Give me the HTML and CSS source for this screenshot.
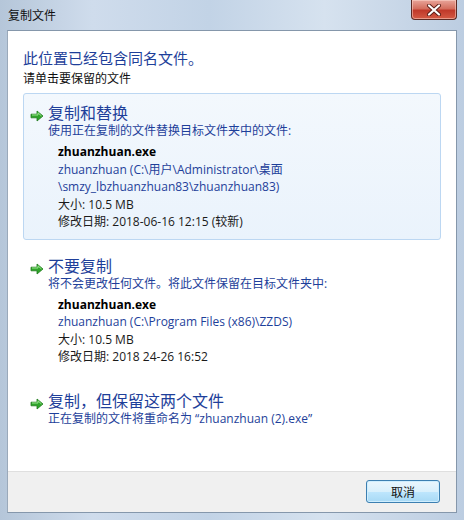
FILE: index.html
```html
<!DOCTYPE html>
<html lang="zh-CN">
<head>
  <meta charset="UTF-8" />
  <title>复制文件</title>
  <link rel="stylesheet" href="styles.css">
</head>
<body>
  <div class="window">
    <div class="titlebar">
      <span class="title">复制文件</span>
      <div class="closeBtn">
        <svg width="16" height="12" viewBox="0 0 16 12">
          <path d="M3 1.5 L13 10.5 M13 1.5 L3 10.5" stroke="#5a1d16" stroke-width="4" stroke-linecap="round"/>
          <path d="M3 1.5 L13 10.5 M13 1.5 L3 10.5" stroke="#ffffff" stroke-width="2.2" stroke-linecap="round"/>
        </svg>
      </div>
    </div>

    <div class="client">
      <div class="content">
        <h1 class="mainText">此位置已经包含同名文件。</h1>
        <p class="hint">请单击要保留的文件</p>

        <div class="option selected">
          <div class="optHead">
            <svg class="arrow" width="14" height="12" viewBox="0 0 14 12">
              <path d="M1 4.2 H7 V1 L13 6 L7 11 V7.8 H1 Z" fill="#2fa52a" stroke="#1f7a1c" stroke-width="0.8"/>
              <path d="M2 5 H8 V2.8 L11.5 6" fill="none" stroke="#9be58f" stroke-width="1"/>
            </svg>
            <span class="optTitle">复制和替换</span>
          </div>
          <p class="optDesc">使用正在复制的文件替换目标文件夹中的文件:</p>
          <div class="fileInfo">
            <p class="fileName">zhuanzhuan.exe</p>
            <p class="filePath">zhuanzhuan (C:\用户\Administrator\桌面<br>\smzy_lbzhuanzhuan83\zhuanzhuan83)</p>
            <p>大小: 10.5 MB</p>
            <p>修改日期: 2018-06-16 12:15 (较新)</p>
          </div>
        </div>

        <div class="option">
          <div class="optHead">
            <svg class="arrow" width="14" height="12" viewBox="0 0 14 12">
              <path d="M1 4.2 H7 V1 L13 6 L7 11 V7.8 H1 Z" fill="#2fa52a" stroke="#1f7a1c" stroke-width="0.8"/>
              <path d="M2 5 H8 V2.8 L11.5 6" fill="none" stroke="#9be58f" stroke-width="1"/>
            </svg>
            <span class="optTitle">不要复制</span>
          </div>
          <p class="optDesc">将不会更改任何文件。将此文件保留在目标文件夹中:</p>
          <div class="fileInfo">
            <p class="fileName">zhuanzhuan.exe</p>
            <p class="filePath">zhuanzhuan (C:\Program Files (x86)\ZZDS)</p>
            <p>大小: 10.5 MB</p>
            <p>修改日期: 2018 24-26 16:52</p>
          </div>
        </div>

        <div class="option">
          <div class="optHead">
            <svg class="arrow" width="14" height="12" viewBox="0 0 14 12">
              <path d="M1 4.2 H7 V1 L13 6 L7 11 V7.8 H1 Z" fill="#2fa52a" stroke="#1f7a1c" stroke-width="0.8"/>
              <path d="M2 5 H8 V2.8 L11.5 6" fill="none" stroke="#9be58f" stroke-width="1"/>
            </svg>
            <span class="optTitle">复制，但保留这两个文件</span>
          </div>
          <p class="optDesc">正在复制的文件将重命名为 “zhuanzhuan (2).exe”</p>
        </div>
      </div>

      <div class="footer">
        <button class="cancelBtn" type="button">取消</button>
      </div>
    </div>
  </div>
</body>
</html>
```

FILE: styles.css
```css
body {
  margin: 0;
  font-family: "Open Sans", "Noto Sans CJK SC", sans-serif;
  font-size: 12px;
  color: #1a1a1a;
}

p, h1 {
  margin: 0;
}

.window {
  width: 464px;
  height: 520px;
  box-sizing: border-box;
  padding: 0 7px 7px 7px;
  display: flex;
  flex-direction: column;
  background: linear-gradient(90deg, #b5c6d9 0%, #cfdcec 20%, #c2d3e6 45%, #d6e2ef 70%, #bccde1 100%);
}

.titlebar {
  height: 30px;
  display: flex;
  align-items: flex-start;
  justify-content: space-between;
}

.title {
  margin-top: 6px;
  margin-left: 1px;
  font-family: "Noto Sans CJK SC", sans-serif;
  font-size: 12px;
  line-height: 17px;
  color: #101010;
}

.closeBtn {
  width: 44px;
  height: 19px;
  border: 1px solid #5c2a24;
  border-top: none;
  border-radius: 0 0 4px 4px;
  background: linear-gradient(180deg, #e8a59a 0%, #d46e5e 45%, #c0392a 55%, #d45a44 100%);
  display: flex;
  align-items: center;
  justify-content: center;
  box-shadow: inset 0 0 0 1px rgba(255, 220, 210, 0.5);
}

.client {
  flex: 1;
  display: flex;
  flex-direction: column;
  background: #ffffff;
  border: 1px solid #8597ab;
  border-left-color: #9aa9ba;
}

.content {
  flex: 1;
  padding: 17px 15px 0 15px;
}

.mainText {
  font-family: "Noto Sans CJK SC", sans-serif;
  font-weight: normal;
  font-size: 15px;
  line-height: 20px;
  color: #1e3f9a;
}

.hint {
  margin-top: 2px;
  font-family: "Noto Sans CJK SC", sans-serif;
  line-height: 16px;
  color: #101010;
}

.option {
  margin-top: 6px;
  padding: 7px 8px 8px 5px;
  border: 1px solid transparent;
  border-radius: 3px;
}

.option:first-of-type {
  margin-top: 7px;
}

.option.selected {
  background: linear-gradient(180deg, #f3f8fd 0%, #eaf3fc 100%);
  border-color: #bcd7f2;
}

.optHead {
  display: flex;
  align-items: center;
  height: 22px;
}

.arrow {
  margin: 8px 4px 0 1px;
}

.optTitle {
  font-family: "Noto Sans CJK SC", sans-serif;
  font-size: 16px;
  line-height: 22px;
  color: #1e3f9a;
}

.optDesc {
  margin-left: 19px;
  line-height: 16px;
  color: #1e3f9a;
}

.fileInfo {
  margin: 4px 0 0 29px;
}

.fileInfo p {
  line-height: 17.5px;
  color: #1a1a1a;
}

.fileInfo .fileName {
  font-weight: bold;
  color: #000000;
}

.fileInfo .filePath {
  color: #1e3f9a;
}

.footer {
  height: 40px;
  border-top: 1px solid #dfdfdf;
  background: #f0f0f0;
  display: flex;
  justify-content: flex-end;
  align-items: flex-start;
  padding-right: 16px;
}

.cancelBtn {
  margin-top: 8px;
  width: 74px;
  height: 23px;
  font-family: "Noto Sans CJK SC", sans-serif;
  font-size: 12px;
  color: #111111;
  border: 1px solid #3c7fb1;
  border-radius: 3px;
  background: linear-gradient(180deg, #eaf6fd 0%, #d9f0fc 50%, #bee6fd 51%, #a7d9f5 100%);
  box-shadow: inset 0 0 0 1px #cfeefe;
}
```
